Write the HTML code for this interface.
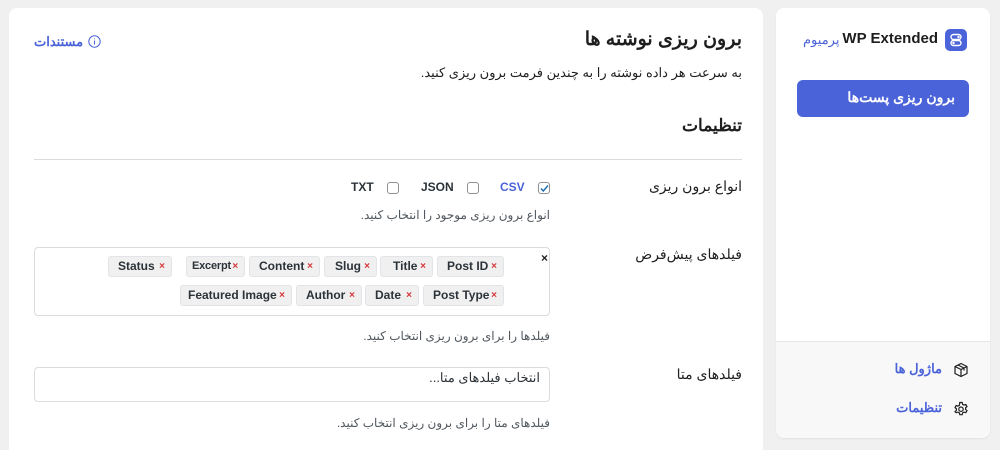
<!DOCTYPE html>
<html><head><meta charset="utf-8"><style>
*{margin:0;padding:0;box-sizing:border-box}
html,body{width:1000px;height:450px;overflow:hidden}
body{background:#f0f0f1;font-family:"Liberation Sans","Noto Sans CJK SC",sans-serif;color:#1e1e1e;position:relative}
.a{position:absolute;white-space:nowrap}
.r{direction:rtl}
.card{position:absolute;background:#fff;border-radius:8px}
.tag{position:absolute;height:21px;background:#f0f0f1;border:1px solid #e2e4e7;border-radius:3px;font-size:12px;line-height:19px;color:#2c3338;padding-left:8px;font-weight:bold}
.tag i{font-style:normal;color:#d63638;font-size:10px;position:absolute;right:6px;top:0}
.cb{position:absolute;width:12px;height:12px;border:1px solid #8c8f94;border-radius:3px;background:#fff}
.help{font-size:12px;color:#50575e}
.lbl{font-size:14px;color:#1e1e1e}
</style></head><body>
<div class="card" style="left:9px;top:8px;width:754px;height:460px"></div>
<div class="card" style="left:776px;top:8px;width:214px;height:430px;overflow:hidden;box-shadow:0 1px 2px rgba(0,0,0,.06)">
  <div style="position:absolute;left:0;right:0;top:333px;bottom:0;background:#f8f8f9;border-top:1px solid #e6e6e6"></div>
</div>

<div class="a r" style="right:258px;top:28px;font-size:19px;font-weight:bold">برون ریزی نوشته ها</div>
<div class="a r" style="right:258px;top:65px;font-size:13px">به سرعت هر داده نوشته را به چندین فرمت برون ریزی کنید.</div>
<div class="a r" style="left:34px;top:34px;font-size:13px;color:#4a63d8;font-weight:bold">مستندات</div>
<svg class="a" style="left:88px;top:35px" width="13" height="13" viewBox="0 0 13 13"><circle cx="6.5" cy="6.5" r="5.7" fill="none" stroke="#4a63d8" stroke-width="1"/><path d="M6.5 5.5v4M6.5 3.5v.8" stroke="#4a63d8" stroke-width="1.1"/></svg>
<div class="a r" style="right:258px;top:116px;font-size:17px;font-weight:bold">تنظیمات</div>
<div class="a" style="left:34px;top:159px;width:708px;height:1px;background:#dcdcde"></div>

<div class="a r lbl" style="right:258px;top:178px">انواع برون ریزی</div>
<div class="cb" style="left:538px;top:182px"></div>
<svg class="a" style="left:540px;top:184px" width="9" height="9" viewBox="0 0 9 9"><path d="M1 4.5l2.3 2.5L8 1.5" fill="none" stroke="#2271b1" stroke-width="1.5"/></svg>
<div class="a" style="left:500px;top:180px;font-size:12px;font-weight:bold;color:#4a63d8">CSV</div>
<div class="cb" style="left:467px;top:182px"></div>
<div class="a" style="left:421px;top:180px;font-size:12px;font-weight:bold;color:#2c3338">JSON</div>
<div class="cb" style="left:387px;top:182px"></div>
<div class="a" style="left:351px;top:180px;font-size:12px;font-weight:bold;color:#2c3338">TXT</div>
<div class="a r help" style="right:450px;top:208px">انواع برون ریزی موجود را انتخاب کنید.</div>

<div class="a r lbl" style="right:258px;top:246px">فیلدهای پیش‌فرض</div>
<div class="a" style="left:34px;top:247px;width:516px;height:69px;border:1px solid #dcdcde;border-radius:4px"></div>
<div class="a" style="left:541px;top:251px;font-size:12px;font-weight:bold">×</div>
<div class="tag" style="left:437px;top:256px;width:67px;padding-left:9px">Post ID<i>×</i></div>
<div class="tag" style="left:380px;top:256px;width:53px;padding-left:12px">Title<i>×</i></div>
<div class="tag" style="left:324px;top:256px;width:53px;padding-left:10px">Slug<i>×</i></div>
<div class="tag" style="left:249px;top:256px;width:71px;padding-left:9px">Content<i>×</i></div>
<div class="tag" style="left:186px;top:256px;width:59px;padding-left:5px;font-size:11px;letter-spacing:-0.2px">Excerpt<i>×</i></div>
<div class="tag" style="left:108px;top:256px;width:64px;padding-left:9px">Status<i>×</i></div>
<div class="tag" style="left:423px;top:285px;width:81px;padding-left:9px">Post Type<i>×</i></div>
<div class="tag" style="left:365px;top:285px;width:54px;padding-left:9px">Date<i>×</i></div>
<div class="tag" style="left:296px;top:285px;width:66px;padding-left:9px">Author<i>×</i></div>
<div class="tag" style="left:180px;top:285px;width:112px;padding-left:7px">Featured Image<i>×</i></div>
<div class="a r help" style="right:450px;top:329px">فیلدها را برای برون ریزی انتخاب کنید.</div>

<div class="a r lbl" style="right:258px;top:366px">فیلدهای متا</div>
<div class="a" style="left:34px;top:367px;width:516px;height:35px;border:1px solid #dcdcde;border-radius:4px"></div>
<div class="a r" style="right:460px;top:370px;font-size:13px;color:#2c3338">انتخاب فیلدهای متا...</div>
<div class="a r help" style="right:450px;top:416px">فیلدهای متا را برای برون ریزی انتخاب کنید.</div>

<div class="a" style="left:945px;top:29px;width:22px;height:22px;background:#4a63d8;border-radius:5px"></div>
<svg class="a" style="left:945px;top:29px" width="22" height="22" viewBox="0 0 22 22"><rect x="6" y="5.5" width="10" height="5" rx="2.5" fill="none" stroke="#fff" stroke-width="1.4"/><rect x="6" y="11.5" width="10" height="5" rx="2.5" fill="none" stroke="#fff" stroke-width="1.4"/><circle cx="13.5" cy="8" r="1.2" fill="#fff"/><circle cx="8.5" cy="14" r="1.2" fill="#fff"/></svg>
<div class="a" style="right:62px;top:30px;font-size:15px;font-weight:bold">WP Extended</div>
<div class="a r" style="left:803px;top:32px;font-size:13px;color:#4a63d8">پرمیوم</div>
<div class="a" style="left:797px;top:80px;width:172px;height:37px;background:#4a63d8;border-radius:6px"></div>
<div class="a r" style="right:45px;top:89px;font-size:14px;font-weight:bold;color:#fff">برون ریزی پست‌ها</div>

<svg class="a" style="left:953px;top:362px" width="16" height="16" viewBox="0 0 16 16" fill="none" stroke="#1e1e1e" stroke-width="1.2" stroke-linejoin="round"><path d="M8 1.5l6 3v7l-6 3-6-3v-7z"/><path d="M2 4.5l6 3 6-3M8 7.5v7M5 3l6 3v2.5"/></svg>
<div class="a r" style="right:58px;top:361px;font-size:13px;font-weight:bold;color:#4a63d8">ماژول ها</div>
<svg class="a" style="left:953px;top:401px" width="16" height="16" viewBox="0 0 16 16" fill="none" stroke="#1e1e1e" stroke-width="1.2"><path d="M6.8 1.5h2.4l.4 1.8 1.4.8 1.8-.6 1.2 2.1-1.4 1.2v1.6l1.4 1.2-1.2 2.1-1.8-.6-1.4.8-.4 1.8H6.8l-.4-1.8-1.4-.8-1.8.6L2 10.6l1.4-1.2V7.8L2 6.6l1.2-2.1 1.8.6 1.4-.8z"/><circle cx="8" cy="8.2" r="2.2"/></svg>
<div class="a r" style="right:58px;top:400px;font-size:13px;font-weight:bold;color:#4a63d8">تنظیمات</div>
</body></html>
